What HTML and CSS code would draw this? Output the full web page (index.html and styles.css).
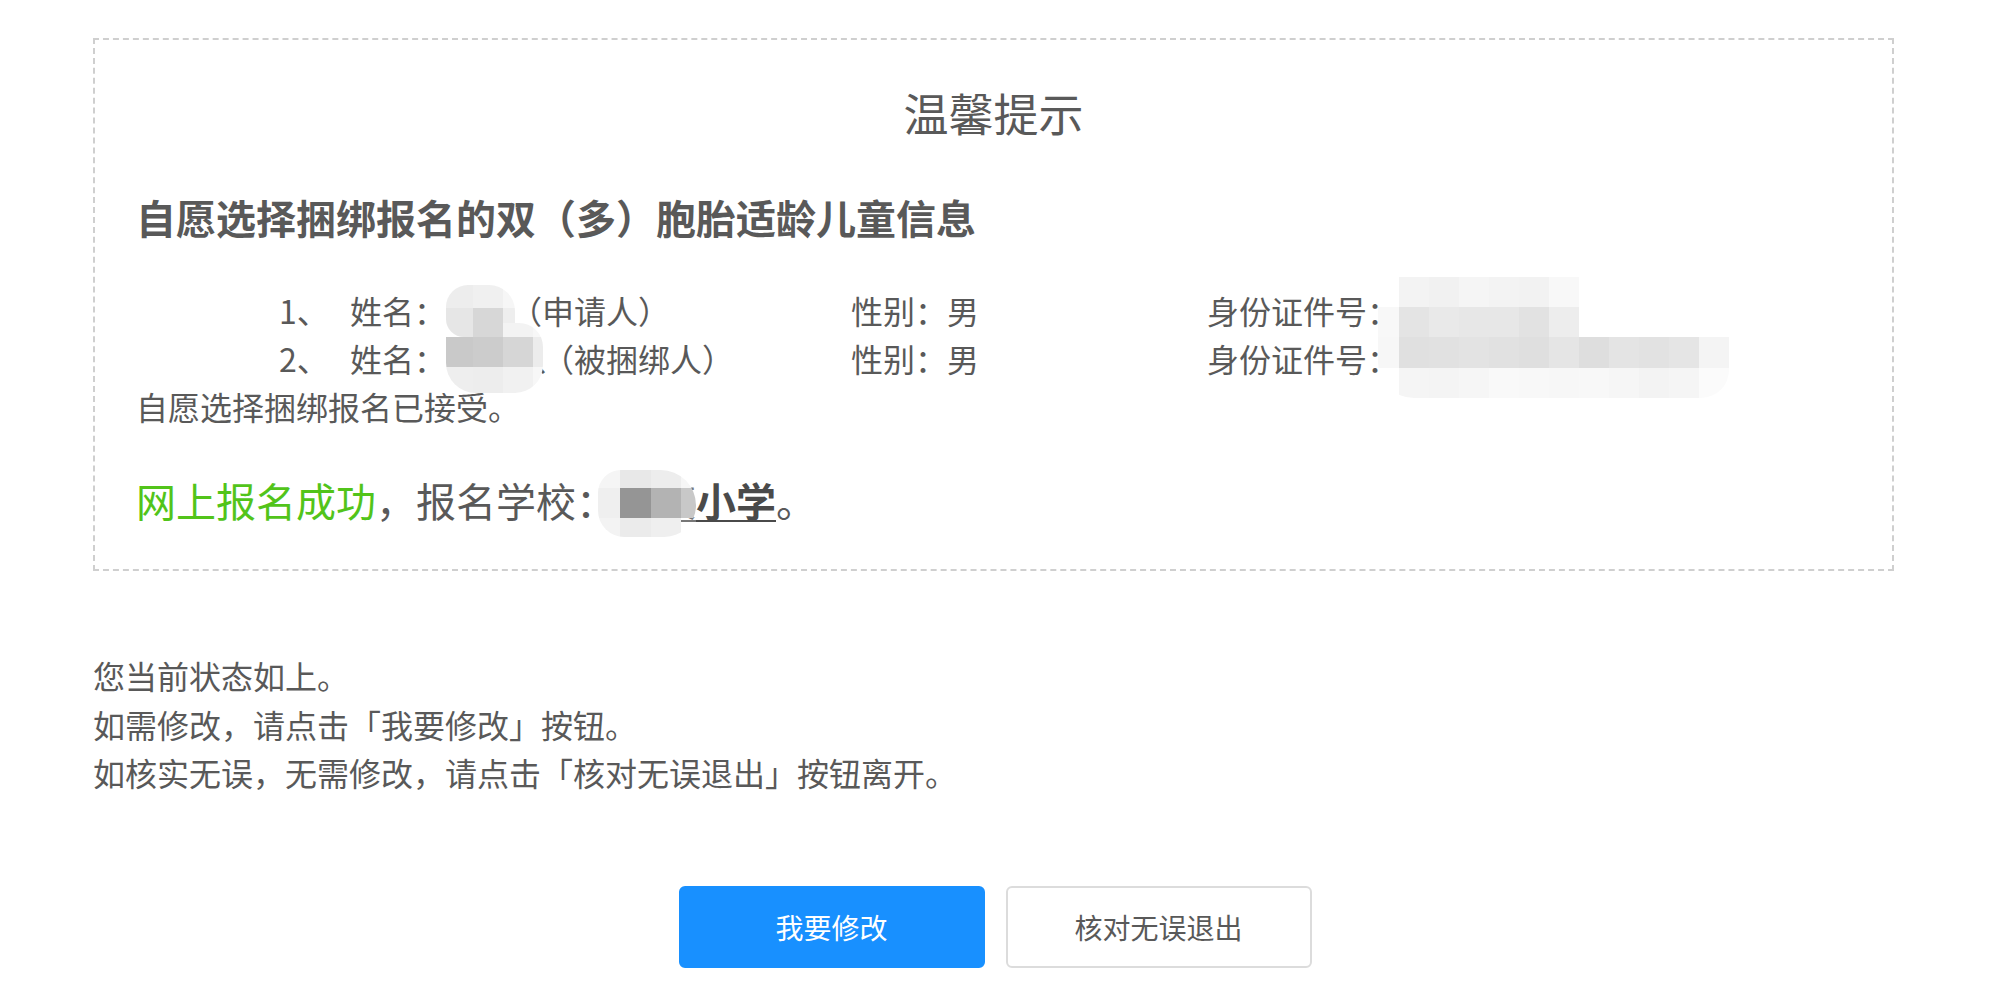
FILE: index.html
```html
<!DOCTYPE html>
<html lang="zh-CN">
<head>
<meta charset="utf-8">
<title>温馨提示</title>
<link rel="stylesheet" href="styles.css">
</head>
<body>
<div class="page">
  <section class="notice">
    <h1 class="notice-title">温馨提示</h1>
    <h2 class="notice-heading">自愿选择捆绑报名的双（多）胞胎适龄儿童信息</h2>
    <div class="child-list">
      <div class="child-row">
        <span class="col-no">1、</span>
        <span class="col-name">姓名：<span class="name name-short"><span class="mosaic mosaic-n1">
          <i class="s-ed"></i><i class="s-f0"></i><i class="s-f6"></i>
          <i class="s-e6"></i><i class="s-d7"></i><i class="s-ee"></i>
        </span></span>（申请人）</span>
        <span class="col-sex">性别：男</span>
        <span class="col-id">身份证件号：<span class="idnum"><span class="mosaic mosaic-id">
          <i class="s-t"></i><i class="s-f3"></i><i class="s-f1"></i><i class="s-f5"></i><i class="s-f3"></i><i class="s-f2"></i><i class="s-f8"></i><i class="s-t"></i><i class="s-t"></i><i class="s-t"></i><i class="s-t"></i><i class="s-t"></i>
          <i class="s-f8"></i><i class="s-e4"></i><i class="s-e9"></i><i class="s-e7"></i><i class="s-e7"></i><i class="s-e2"></i><i class="s-ed"></i><i class="s-t"></i><i class="s-t"></i><i class="s-t"></i><i class="s-t"></i><i class="s-t"></i>
          <i class="s-f7"></i><i class="s-e0"></i><i class="s-e1"></i><i class="s-e3"></i><i class="s-e1"></i><i class="s-df"></i><i class="s-e5"></i><i class="s-de"></i><i class="s-e4"></i><i class="s-e2"></i><i class="s-e5"></i><i class="s-f4"></i>
          <i class="s-t"></i><i class="s-f5"></i><i class="s-f4"></i><i class="s-f6"></i><i class="s-f9"></i><i class="s-f8"></i><i class="s-f7"></i><i class="s-f8"></i><i class="s-f6"></i><i class="s-f3"></i><i class="s-f5"></i><i class="s-fb"></i>
        </span></span></span>
      </div>
      <div class="child-row">
        <span class="col-no">2、</span>
        <span class="col-name">姓名：<span class="name name-long"><span class="mosaic mosaic-n2">
          <i class="s-t"></i><i class="s-t"></i><i class="s-f3"></i><i class="s-f7"></i>
          <i class="s-c9"></i><i class="s-cc"></i><i class="s-d6"></i><i class="s-ec"></i>
          <i class="s-ee"></i><i class="s-ed"></i><i class="s-f1"></i><i class="s-f7"></i>
        </span></span><span class="dun">、</span>（被捆绑人）</span>
        <span class="col-sex">性别：男</span>
        <span class="col-id">身份证件号：</span>
      </div>
      <p class="child-note">自愿选择捆绑报名已接受。</p>
    </div>
    <p class="result"><span class="ok">网上报名成功</span>，报名学校：<a class="school"><span class="school-redact">某某<span class="mosaic mosaic-school">
      <i class="s-f5"></i><i class="s-e8"></i><i class="s-ed"></i><i class="s-f6"></i>
      <i class="s-ef"></i><i class="s-95"></i><i class="s-b3"></i><i class="s-c8"></i>
      <i class="s-f3"></i><i class="s-eb"></i><i class="s-ef"></i><i class="s-t"></i>
    </span></span>小学</a>。</p>
  </section>

  <div class="status-text">
    <p>您当前状态如上。</p>
    <p>如需修改，请点击「我要修改」按钮。</p>
    <p>如核实无误，无需修改，请点击「核对无误退出」按钮离开。</p>
  </div>

  <div class="actions">
    <button class="btn btn-primary" type="button">我要修改</button>
    <button class="btn btn-default" type="button">核对无误退出</button>
  </div>
</div>
</body>
</html>
```
FILE: styles.css
```css
* { box-sizing: border-box; }
html, body { margin: 0; padding: 0; background: #fff; }
body {
  font-family: "Noto Sans CJK SC", "Noto Sans", sans-serif;
  color: #595959;
  width: 1990px;
}
p, h1, h2 { margin: 0; }

.notice {
  margin: 38px 96px 0 93px;
  border: 2px dashed #cfcfcf;
  padding: 43px 41px 41px 41px;
}
.notice-title {
  font-size: 45px;
  font-weight: 400;
  line-height: 60px;
  text-align: center;
  color: #595959;
}
.notice-heading {
  margin-top: 46px;
  font-size: 40px;
  font-weight: 700;
  line-height: 56px;
  color: #595959;
}
.child-list {
  margin-top: 41px;
  font-size: 32px;
  line-height: 48px;
}
.child-row {
  display: grid;
  grid-template-columns: 71px 501px 356px auto;
  padding-left: 143px;
  white-space: nowrap;
}
.name {
  position: relative;
  display: inline-block;
  height: 48px;
  vertical-align: top;
}
.name-short { width: 64px; }
.name-long { width: 88px; }
.dun { margin-right: -8px; }
.idnum {
  position: relative;
  display: inline-block;
  width: 10px;
  height: 48px;
  vertical-align: top;
}

.mosaic {
  position: absolute;
  display: grid;
  overflow: hidden;
}
.mosaic i { display: block; }
.mosaic-n1 {
  left: 0; top: -1px;
  width: 69px; height: 52px;
  grid-template-columns: 27px 30px 12px;
  grid-template-rows: 23px 29px;
  border-radius: 22px 26px 8px 18px;
}
.mosaic-n2 {
  left: 0; top: -11px;
  width: 97px; height: 70px;
  grid-template-columns: 27px 30px 30px 10px;
  grid-template-rows: 14px 30px 26px;
  border-radius: 0 24px 28px 30px;
}
.mosaic-id {
  left: -21px; top: -9px;
  width: 351px; height: 121px;
  grid-template-columns: 21px repeat(11, 30px);
  grid-template-rows: 30px 30px 31px 30px;
  border-radius: 0 0 28px 36px;
}
.mosaic-school {
  left: -18px; top: -2px;
  width: 98px; height: 67px;
  grid-template-columns: 22px 31px 30px 15px;
  grid-template-rows: 18px 30px 19px;
  border-radius: 26px 40px 36px 30px;
}

.s-t { background: transparent; }
.s-fb { background: #fbfbfb; }
.s-f9 { background: #f9f9f9; }
.s-f8 { background: #f8f8f8; }
.s-f7 { background: #f7f7f7; }
.s-f6 { background: #f6f6f6; }
.s-f5 { background: #f5f5f5; }
.s-f4 { background: #f4f4f4; }
.s-f3 { background: #f3f3f3; }
.s-f2 { background: #f2f2f2; }
.s-f1 { background: #f1f1f1; }
.s-f0 { background: #f0f0f0; }
.s-ef { background: #efefef; }
.s-ee { background: #eeeeee; }
.s-ed { background: #ededed; }
.s-ec { background: #ececec; }
.s-eb { background: #ebebeb; }
.s-e9 { background: #e9e9e9; }
.s-e8 { background: #e8e8e8; }
.s-e7 { background: #e7e7e7; }
.s-e6 { background: #e6e6e6; }
.s-e5 { background: #e5e5e5; }
.s-e4 { background: #e4e4e4; }
.s-e3 { background: #e3e3e3; }
.s-e2 { background: #e2e2e2; }
.s-e1 { background: #e1e1e1; }
.s-e0 { background: #e0e0e0; }
.s-df { background: #dfdfdf; }
.s-de { background: #dedede; }
.s-d7 { background: #d7d7d7; }
.s-d6 { background: #d6d6d6; }
.s-cc { background: #cccccc; }
.s-c9 { background: #c9c9c9; }
.s-c8 { background: #c8c8c8; }
.s-b3 { background: #b3b3b3; }
.s-95 { background: #959595; }

.result {
  margin-top: 42px;
  font-size: 40px;
  line-height: 56px;
  white-space: nowrap;
}
.ok { color: #52c41a; }
.school {
  color: #4a4a4a;
  font-weight: 700;
  text-decoration: underline;
  text-decoration-thickness: 2px;
  text-underline-offset: 3px;
}
.school-redact {
  position: relative;
  display: inline-block;
  font-weight: 400;
  color: #777;
  text-decoration: underline;
  text-decoration-thickness: 2px;
  text-underline-offset: 3px;
}

.status-text {
  margin: 80px 0 0 93px;
  font-size: 32px;
  line-height: 48.5px;
  color: #595959;
}

.actions {
  display: flex;
  justify-content: center;
  gap: 21px;
  margin-top: 89.5px;
}
.btn {
  width: 306px;
  height: 82px;
  border-radius: 6px;
  font-family: "Noto Sans CJK SC", "Noto Sans", sans-serif;
  font-size: 28px;
  padding: 0;
  cursor: pointer;
}
.btn-primary {
  background: #1890ff;
  border: 2px solid #1890ff;
  color: #fff;
}
.btn-default {
  background: #fff;
  border: 2px solid #dcdcdc;
  color: #595959;
}
```
